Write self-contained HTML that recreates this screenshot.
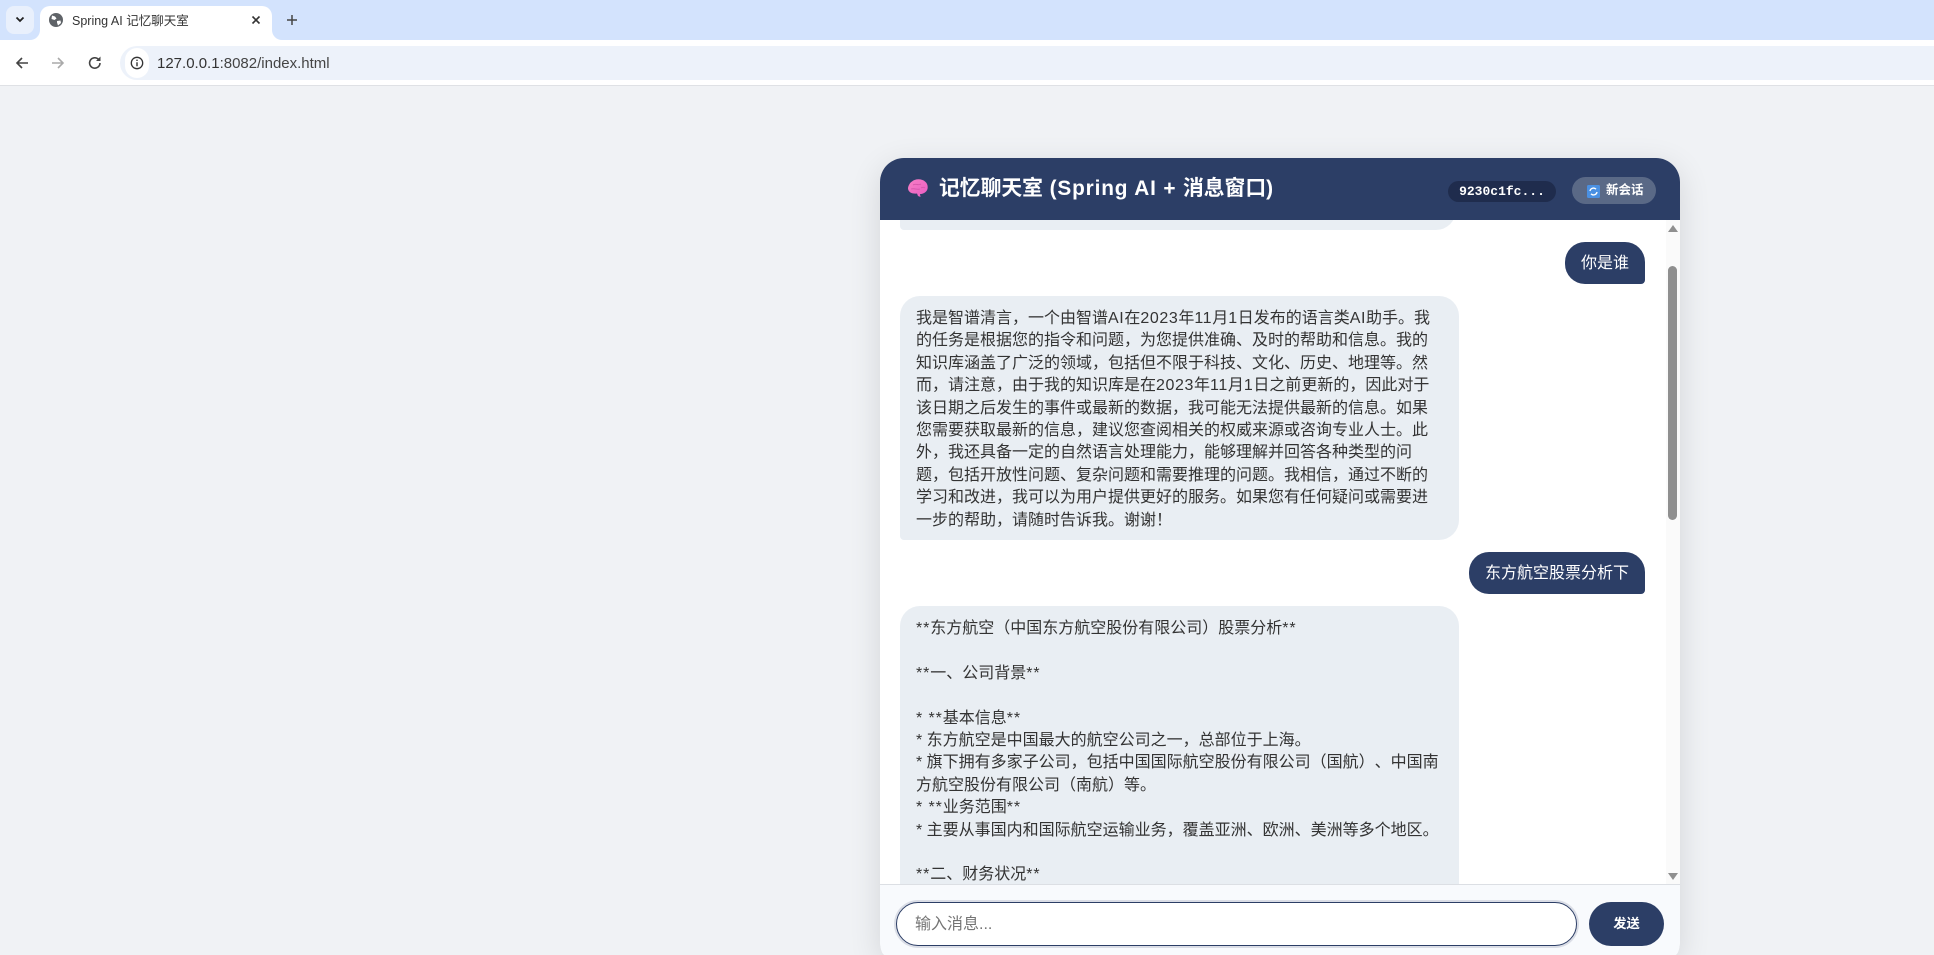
<!DOCTYPE html>
<html lang="zh-CN"><head><meta charset="utf-8"><title>Spring AI 记忆聊天室</title>
<style>
*{box-sizing:border-box;margin:0;padding:0}
html,body{width:1934px;height:955px;overflow:hidden;background:#f0f2f5;font-family:"Liberation Sans","Noto Sans CJK SC",sans-serif;text-spacing-trim:space-all}
#page{position:relative;width:1934px;height:955px;overflow:hidden}
.a{position:absolute}
.l{letter-spacing:.6px;font-style:normal}
.s{letter-spacing:.9px;font-style:normal}
#strip{left:0;top:0;width:1934px;height:40px;background:#d3e3fd}
#bar{left:0;top:40px;width:1934px;height:46px;background:#fff;border-bottom:1px solid #dfe1e5}
#tabs{left:6px;top:6px;width:28px;height:28px;background:#e9f0fc;border-radius:8px}
#tab{left:40px;top:6px;width:232px;height:34px;background:#fff;border-radius:10px 10px 0 0}
#tabt{left:72px;top:13px;font-size:12.5px;line-height:16px;color:#333;white-space:nowrap}
#omni{left:120px;top:46px;width:1814px;height:34px;background:#edf2fa;border-radius:17px 0 0 17px}
#info{left:125px;top:48px;width:24px;height:30px;background:#fff;border-radius:15px}
#url{left:157px;top:55px;font-size:15px;line-height:18px;color:#333;white-space:nowrap}
#card{left:880px;top:158px;width:800px;height:797px;background:#fff;border-radius:24px 24px 5px 5px/24px 24px 15px 15px;box-shadow:0 8px 32px rgba(0,0,0,.12);overflow:hidden}
#head{left:0;top:0;width:800px;height:62px;background:#2c3e66;z-index:3}
#title{left:59px;top:16px;font-size:20.8px;line-height:30px;font-weight:700;color:#fff;white-space:nowrap}
#title i{font-style:normal;letter-spacing:.85px}
#sid{left:568px;top:23px;width:108px;height:21px;background:#1f2c4d;border-radius:11px;color:#fff;font:bold 13px/21px "Liberation Mono",monospace;text-align:center}
#newb{left:692px;top:19px;width:84px;height:27px;background:#5a6986;border-radius:14px;color:#fff;font-size:12.5px;font-weight:700;line-height:27px;padding-left:34px}
.m{position:absolute;font-size:16px;line-height:22.4px;white-space:nowrap}
.ai{background:#e9eef3;color:#333;border-radius:20px 20px 20px 4px;left:20px;width:559px;padding:12px 16px}
.u{background:#2c3e66;color:#fff;border-radius:20px 20px 4px 20px;padding:11px 16px 9px;height:42px}
#track{left:786px;top:62px;width:14px;height:664px;background:#fafafa}
#thumb{left:788px;top:108px;width:9px;height:254px;background:#8f8f8f;border-radius:5px}
#foot{left:0;top:726px;width:800px;height:71px;background:#f8fafd;border-top:1px solid #dcdfe4;z-index:3}
#inp{left:16px;top:16px;width:681px;height:44px;background:#fff;border:1.5px solid #2c3e66;border-radius:22px;box-shadow:0 0 0 2px rgba(44,62,102,.15);font-size:16px;line-height:43px;padding-left:18px;color:#757575}
#send{left:709px;top:16px;width:75px;height:44px;background:#2c3e66;border-radius:22px;color:#fff;font-size:13.3px;font-weight:700;line-height:44px;text-align:center}
</style></head><body><div id="page">
<div id="strip" class="a"></div>
<div id="bar" class="a"></div>
<div id="tabs" class="a"></div>
<svg class="a" style="left:14px;top:15px" width="12" height="10" viewBox="0 0 12 10"><path d="M2.500 2.500L6 6l3.500-3.500" fill="none" stroke="#222" stroke-width="1.800"/></svg>
<div id="tab" class="a"></div>
<svg class="a" style="left:272px;top:30px" width="10" height="10"><path d="M0 0A10 10 0 0 0 10 10H0Z" fill="#fff"/></svg>
<svg class="a" style="left:30px;top:30px" width="10" height="10"><path d="M10 0A10 10 0 0 1 0 10H10Z" fill="#fff"/></svg>
<svg class="a" style="left:49px;top:13px" width="14" height="14" viewBox="0 0 14 14"><circle cx="7" cy="7" r="7" fill="#5f6368"/><path d="M3 2.500l3 1 1.500 2-2 1.500-3-1zM8 8l3.500-.5.5 2.500-3 2.500-1-3z" fill="#fff"/></svg>
<div id="tabt" class="a">Spring AI 记忆聊天室</div>
<svg class="a" style="left:250px;top:14px" width="12" height="12" viewBox="0 0 12 12"><path d="M2.500 2.500l7 7M9.500 2.500l-7 7" stroke="#333" stroke-width="1.600"/></svg>
<svg class="a" style="left:286px;top:14px" width="12" height="12" viewBox="0 0 12 12"><path d="M6 1v10M1 6h10" stroke="#444" stroke-width="1.500"/></svg>
<svg class="a" style="left:14px;top:55px" width="16" height="16" viewBox="0 0 16 16"><path d="M14 8H3M8 3L3 8l5 5" fill="none" stroke="#444" stroke-width="1.600"/></svg>
<svg class="a" style="left:50px;top:55px" width="16" height="16" viewBox="0 0 16 16"><path d="M2 8h11M8 3l5 5-5 5" fill="none" stroke="#aaa" stroke-width="1.600"/></svg>
<svg class="a" style="left:87px;top:55px" width="16" height="16" viewBox="0 0 16 16"><path d="M13 8a5.200 5.200 0 1 1-1.500-3.700" fill="none" stroke="#444" stroke-width="1.600"/><path d="M13.500 1.500v4.500H9z" fill="#444"/></svg>
<div id="omni" class="a"></div>
<div id="info" class="a"></div>
<svg class="a" style="left:130px;top:56px" width="14" height="14" viewBox="0 0 14 14"><circle cx="7" cy="7" r="5.700" fill="none" stroke="#333" stroke-width="1.300"/><path d="M7 6.200v4M7 3.600v1.400" stroke="#333" stroke-width="1.400"/></svg>
<div id="url" class="a">127.0.0.1<span style="color:#444">:8082/index.html</span></div>

<div id="card" class="a">
<div class="m ai" style="top:-200px;height:272px;width:556px"></div>
<div class="m u" style="left:685px;top:84px;width:80px">你是谁</div>
<div class="m ai" style="top:138px;height:244px">我是智谱清言，一个由智谱<i class="l">AI</i>在<i class="l">2023</i>年<i class="l">11</i>月<i class="l">1</i>日发布的语言类<i class="l">AI</i>助手。我<br>的任务是根据您的指令和问题，为您提供准确、及时的帮助和信息。我的<br>知识库涵盖了广泛的领域，包括但不限于科技、文化、历史、地理等。然<br>而，请注意，由于我的知识库是在<i class="l">2023</i>年<i class="l">11</i>月<i class="l">1</i>日之前更新的，因此对于<br>该日期之后发生的事件或最新的数据，我可能无法提供最新的信息。如果<br>您需要获取最新的信息，建议您查阅相关的权威来源或咨询专业人士。此<br>外，我还具备一定的自然语言处理能力，能够理解并回答各种类型的问<br>题，包括开放性问题、复杂问题和需要推理的问题。我相信，通过不断的<br>学习和改进，我可以为用户提供更好的服务。如果您有任何疑问或需要进<br>一步的帮助，请随时告诉我。谢谢！</div>
<div class="m u" style="left:589px;top:394px;width:176px">东方航空股票分析下</div>
<div class="m ai" style="top:448px;height:278px;border-radius:20px 20px 0 0"><i class="s">**</i>东方航空（中国东方航空股份有限公司）股票分析<i class="s">**</i><br><br><i class="s">**</i>一、公司背景<i class="s">**</i><br><br><i class="s">* **</i>基本信息<i class="s">**</i><br>* 东方航空是中国最大的航空公司之一，总部位于上海。<br>* 旗下拥有多家子公司，包括中国国际航空股份有限公司（国航）、中国南<br>方航空股份有限公司（南航）等。<br><i class="s">* **</i>业务范围<i class="s">**</i><br>* 主要从事国内和国际航空运输业务，覆盖亚洲、欧洲、美洲等多个地区。<br><br><i class="s">**</i>二、财务状况<i class="s">**</i></div>
<div id="track" class="a"></div>
<div id="thumb" class="a"></div>
<svg class="a" style="left:788px;top:67px" width="10" height="8"><path d="M5 0l5 7H0z" fill="#8f8f8f"/></svg>
<svg class="a" style="left:788px;top:715px" width="10" height="8"><path d="M0 0h10L5 7z" fill="#8f8f8f"/></svg>
<div id="head" class="a">
<svg class="a" style="left:27px;top:21px" width="22" height="20" viewBox="0 0 22 20"><defs><linearGradient id="g" x1="0" y1="0" x2="1" y2="1"><stop offset="0" stop-color="#f77fc4"/><stop offset="1" stop-color="#e95cc4"/></linearGradient></defs><path d="M5 2.500C8-.5 15-.5 18 2.500c3 2 3.500 7 1.500 9.500C17 15 14 15 13 15l.5 3-2.500-1-1-2.500C6 15 1.500 14 1 9.500 1 7 3 3.500 5 2.500z" fill="url(#g)"/><path d="M6 6c3-2 5 1 8-1M4 10c4-1 6 1 9 0M14 9c2-1 3-1 4 0" fill="none" stroke="#d558ab" stroke-width=".9"/></svg>
<div id="title" class="a">记忆聊天室<i> (Spring AI + </i>消息窗口<i>)</i></div>
<div id="sid" class="a">9230c1fc...</div>
<div id="newb" class="a">新会话</div>
<svg class="a" style="left:707px;top:27px" width="13" height="13" viewBox="0 0 13 13"><rect width="13" height="13" rx="1.500" fill="#4a90e2"/><path d="M3 6a3.500 3.500 0 0 1 6-1.800M10 7a3.500 3.500 0 0 1-6 1.800" fill="none" stroke="#fff" stroke-width="1.400"/></svg>
</div>
<div id="foot" class="a">
<div id="inp" class="a" style="top:17px">输入消息...</div>
<div id="send" class="a" style="top:17px">发送</div>
</div>
</div>
</div></body></html>
